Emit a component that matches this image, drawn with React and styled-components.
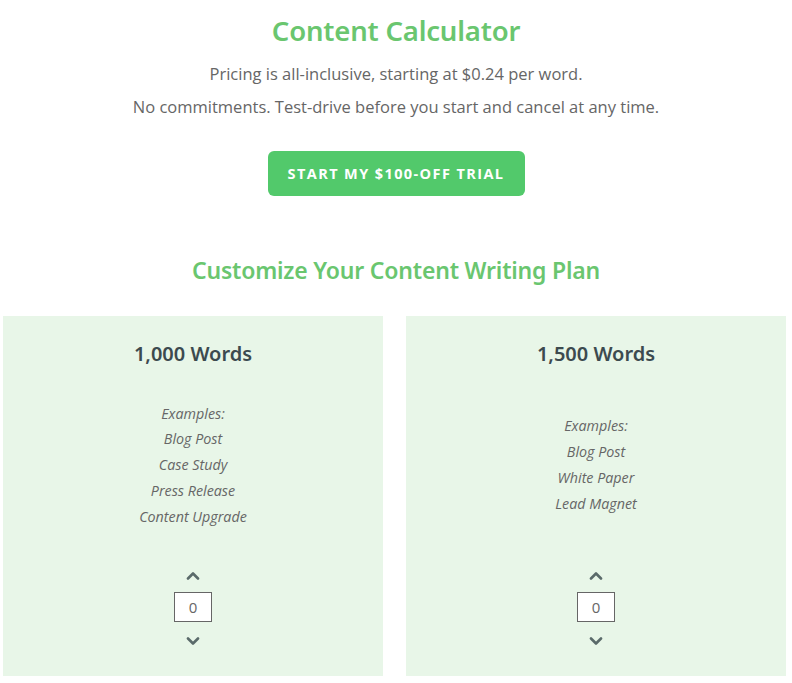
import React, { useState } from "react";
import styled, { createGlobalStyle } from "styled-components";

const GlobalStyle = createGlobalStyle`
  * { box-sizing: border-box; }
  body {
    margin: 0;
    background: #ffffff;
    font-family: "Open Sans", "Liberation Sans", sans-serif;
    color: #666666;
  }
`;

const Page = styled.div`
  width: 792px;
  display: flex;
  flex-direction: column;
  align-items: center;
`;

const Title = styled.h1`
  margin: 12px 0 0;
  font-family: "Noto Sans", "Open Sans", sans-serif;
  font-weight: 600;
  font-size: 27.5px;
  line-height: 38px;
  color: #6ac66f;
  letter-spacing: -0.2px;
`;

const Lead = styled.p`
  margin: 0;
  font-size: 16.5px;
  line-height: 33px;
  color: #666666;
  &:first-of-type {
    margin-top: 7px;
  }
`;

const TrialButton = styled.button`
  margin-top: 28px;
  width: 257px;
  height: 45px;
  border: none;
  border-radius: 6px;
  background: #52c96b;
  color: #ffffff;
  font-family: "Open Sans", sans-serif;
  font-weight: 700;
  font-size: 14.5px;
  letter-spacing: 1.4px;
  cursor: pointer;
`;

const Subtitle = styled.h2`
  margin: 58px 0 0;
  font-family: "Noto Sans", "Open Sans", sans-serif;
  font-weight: 600;
  font-size: 23px;
  line-height: 32px;
  color: #6ac66f;
  letter-spacing: -0.2px;
`;

const Cards = styled.div`
  margin-top: 30px;
  width: 100%;
  padding: 0 6px 0 3px;
  display: grid;
  grid-template-columns: 380px 380px;
  column-gap: 23px;
`;

const Card = styled.div`
  height: 360px;
  background: #e8f6e8;
  display: flex;
  flex-direction: column;
  align-items: center;
  padding-top: 24px;
`;

const CardTitle = styled.h3`
  margin: 0;
  font-family: "Noto Sans", "Open Sans", sans-serif;
  font-weight: 600;
  font-size: 20px;
  line-height: 28px;
  color: #3c4a4f;
`;

const Examples = styled.ul`
  list-style: none;
  margin: 22px 0 0;
  padding: 0;
  height: 150px;
  display: flex;
  flex-direction: column;
  justify-content: center;
  align-items: center;
`;

const ExampleItem = styled.li`
  font-size: 14.3px;
  font-style: italic;
  line-height: 25.8px;
  color: #666666;
`;

const Spinner = styled.div`
  margin-top: 29px;
  display: flex;
  flex-direction: column;
  align-items: center;
  gap: 11px;
`;

const Arrow = styled.button`
  border: none;
  background: none;
  padding: 0;
  width: 16px;
  height: 12px;
  display: flex;
  align-items: center;
  justify-content: center;
  cursor: pointer;
  color: #5a6a6a;
  &:last-child {
    margin-top: 2px;
  }
`;

const Count = styled.input`
  width: 38px;
  height: 30px;
  border: 1px solid #666666;
  background: #ffffff;
  text-align: center;
  font-family: "Open Sans", sans-serif;
  font-weight: 400;
  font-size: 15px;
  color: #666666;
  padding: 0;
`;

const Chevron = ({ up }) => (
  <svg width="14" height="9" viewBox="0 0 14 9">
    <path
      d={up ? "M2 7.5 L7 2.5 L12 7.5" : "M2 1.5 L7 6.5 L12 1.5"}
      fill="none"
      stroke="currentColor"
      strokeWidth="2.6"
      strokeLinecap="round"
      strokeLinejoin="round"
    />
  </svg>
);

const plans = [
  { words: "1,000 Words", examples: ["Blog Post", "Case Study", "Press Release", "Content Upgrade"] },
  { words: "1,500 Words", examples: ["Blog Post", "White Paper", "Lead Magnet"] },
];

function PlanCard({ plan }) {
  const [count, setCount] = useState(0);
  return (
    <Card>
      <CardTitle>{plan.words}</CardTitle>
      <Examples>
        <ExampleItem>Examples:</ExampleItem>
        {plan.examples.map((ex) => (
          <ExampleItem key={ex}>{ex}</ExampleItem>
        ))}
      </Examples>
      <Spinner>
        <Arrow onClick={() => setCount(count + 1)} aria-label="increase">
          <Chevron up />
        </Arrow>
        <Count value={count} onChange={(e) => setCount(Number(e.target.value) || 0)} />
        <Arrow onClick={() => setCount(Math.max(0, count - 1))} aria-label="decrease">
          <Chevron />
        </Arrow>
      </Spinner>
    </Card>
  );
}

export default function App() {
  return (
    <>
      <GlobalStyle />
      <Page>
        <Title>Content Calculator</Title>
        <Lead>Pricing is all-inclusive, starting at $0.24 per word.</Lead>
        <Lead>No commitments. Test-drive before you start and cancel at any time.</Lead>
        <TrialButton>START MY $100-OFF TRIAL</TrialButton>
        <Subtitle>Customize Your Content Writing Plan</Subtitle>
        <Cards>
          {plans.map((p) => (
            <PlanCard key={p.words} plan={p} />
          ))}
        </Cards>
      </Page>
    </>
  );
}
